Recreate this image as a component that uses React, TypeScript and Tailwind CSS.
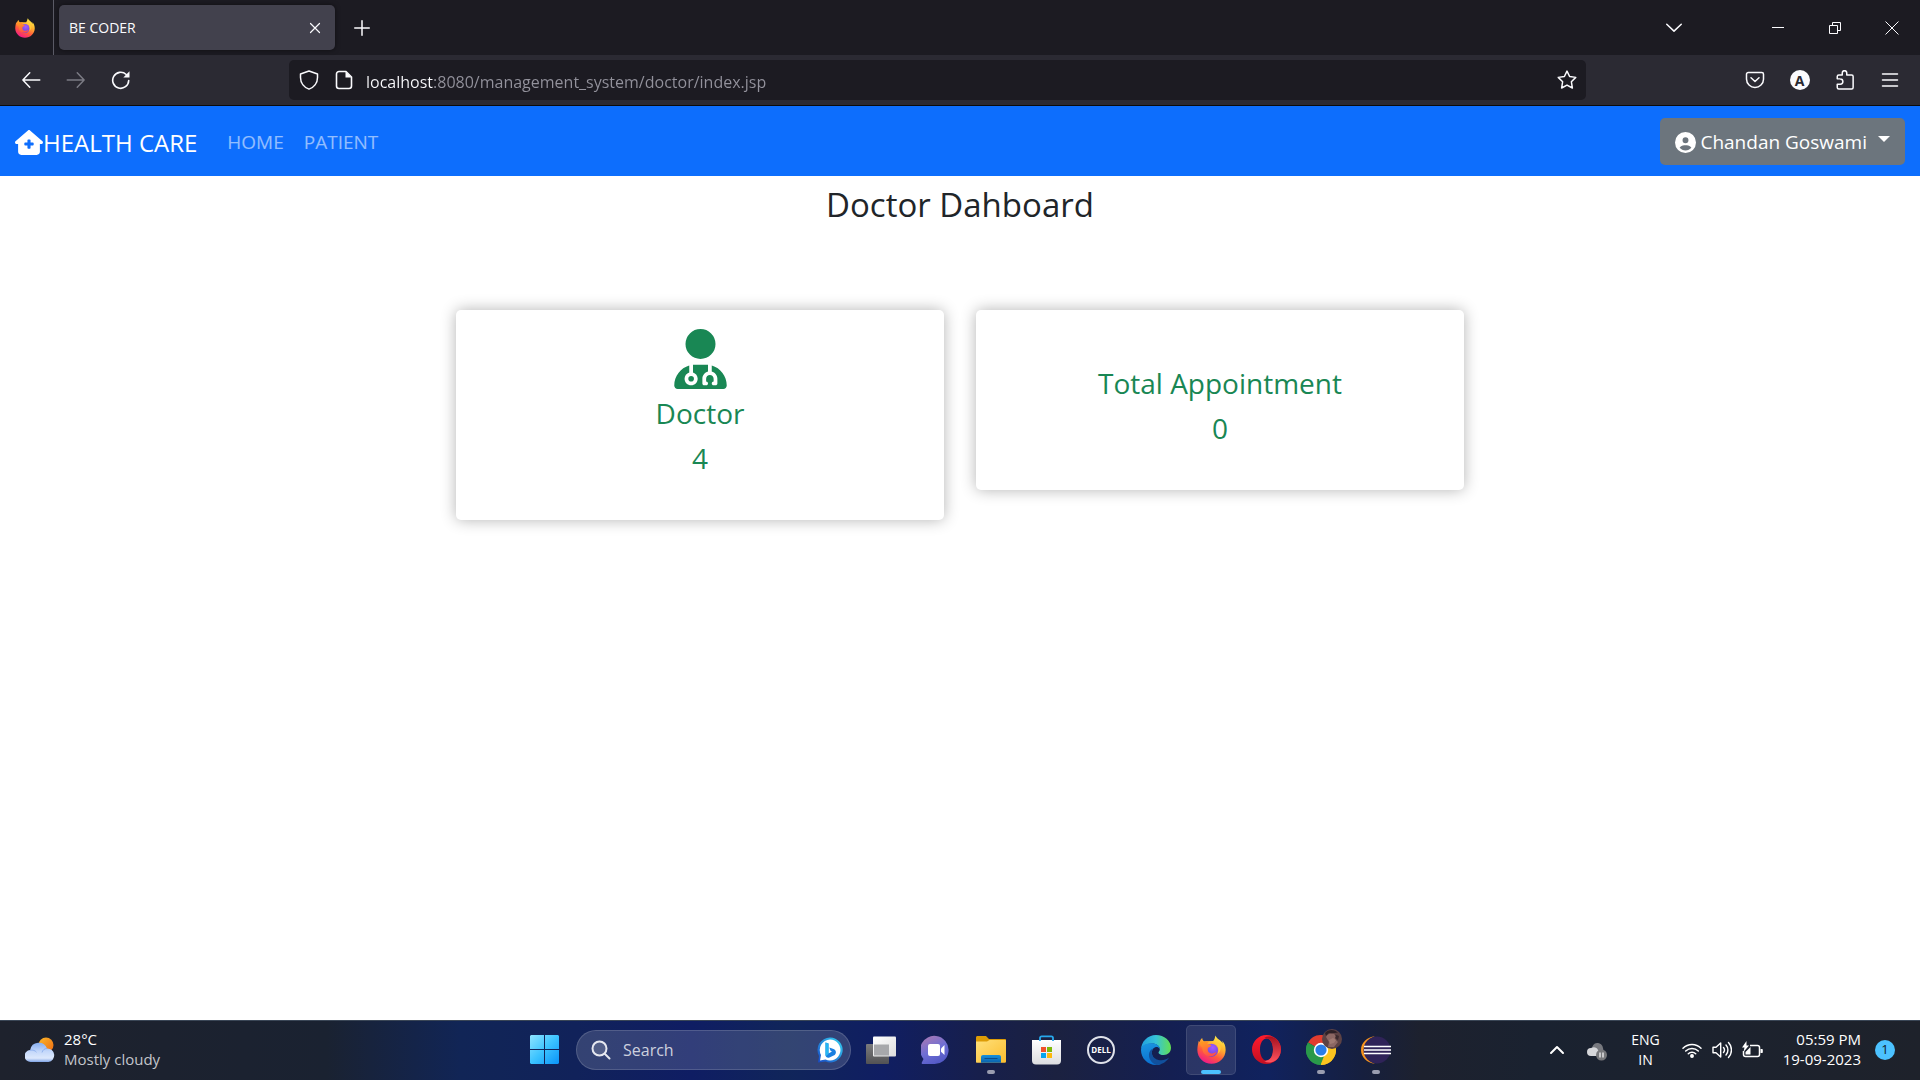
import React from "react";
import type { ReactNode } from "react";
import { FaCircleUser, FaHouseMedical, FaUserDoctor } from "react-icons/fa6";

/* ---------- browser icons ---------- */

function FirefoxLogo({ id, className }: { id: string; className: string }) {
  return (
    <svg viewBox="0 0 32 32" className={className} aria-hidden="true">
      <defs>
        <linearGradient id={`${id}-body`} x1="0.8" y1="0.05" x2="0.3" y2="1">
          <stop offset="0" stopColor="#fff04a" />
          <stop offset="0.35" stopColor="#ffb02e" />
          <stop offset="0.65" stopColor="#ff5a3c" />
          <stop offset="1" stopColor="#f0168c" />
        </linearGradient>
        <radialGradient id={`${id}-core`} cx="0.6" cy="0.3" r="0.8">
          <stop offset="0" stopColor="#a45bff" />
          <stop offset="1" stopColor="#5b3fd6" />
        </radialGradient>
        <linearGradient id={`${id}-fox`} x1="0.2" y1="0" x2="0.6" y2="1">
          <stop offset="0" stopColor="#ff9a1f" />
          <stop offset="1" stopColor="#ff4f4a" />
        </linearGradient>
      </defs>
      <path
        d="M20.5.5c-1 2.600-.8 4.200-2.700 6.200L7.600 6.800C6.300 5.800 5.800 4.600 5.800 3.200 4.300 4.200 3.400 5.900 3 7.600L1.800 6.600C1.500 9 .4 12 .4 16.500.4 25 7.400 31.700 16 31.700S31.600 25 31.600 16.500c0-4.500-1.400-8-4-10.200.5 1.200.8 2.200.9 3.200C26.300 5.200 21.700 4.500 20.500.5Z"
        fill={`url(#${id}-body)`}
      />
      <circle cx="16" cy="16.800" r="7.200" fill={`url(#${id}-core)`} />
      <path
        d="M3 8.500c2-1.500 4-1.500 5.500-.8 1.500-.8 3.200-1 4.800-.6-1 .8-1.800 1.800-2 2.900 1.100.8 3.700.6 4.500 1-.2 1.700-2.300 2.100-3.500 3-.5.600-.3 1.700-.5 2.200.2 2.900 2.600 4.400 5 4.200 2.200-.2 3.300-1.700 4.800-1.300-1.300 3.300-4.100 4.600-7 4.400C8.500 23.100 5.500 19 6 13.500 4.600 13.500 3.500 11 3 8.500Z"
        fill={`url(#${id}-fox)`}
      />
      <path d="M17.500 8.200c3.200.6 6.300 3.300 6.300 8.300 0 1.500-.4 3-1.200 4.200 2.400-1.400 3.900-4 3.600-7.100-.3-3.200-3.600-6.400-8.700-5.400Z" fill="#ffc93a" />
    </svg>
  );
}

function Stroke({
  children,
  box = 16,
  width = 1.2,
  className = "size-5",
}: {
  children: ReactNode;
  box?: number;
  width?: number;
  className?: string;
}) {
  return (
    <svg
      viewBox={`0 0 ${box} ${box}`}
      className={className}
      fill="none"
      stroke="currentColor"
      strokeWidth={width}
      strokeLinecap="round"
      strokeLinejoin="round"
      aria-hidden="true"
    >
      {children}
    </svg>
  );
}

const ToolButton = ({ label, children, className = "w-[45px]" }: { label: string; children: ReactNode; className?: string }) => (
  <button type="button" aria-label={label} className={`flex h-10 shrink-0 items-center justify-center ${className}`}>
    {children}
  </button>
);

function TabStrip() {
  return (
    <div className="flex h-[55px] items-center bg-[#1c1b22] text-[#fbfbfe]">
      <div className="flex h-full w-[54px] items-center justify-center border-r border-[#5b5b66] pr-1">
        <FirefoxLogo id="strip" className="size-5" />
      </div>
      <div className="ml-[5px] flex h-[45px] w-[276px] items-center justify-between rounded-[5px] bg-[#42414d] pr-2 pl-[10px] shadow-[0_0_5px_rgba(0,0,0,0.5)]">
        <span className="text-[14px]">BE CODER</span>
        <button type="button" aria-label="Close tab" className="flex size-6 items-center justify-center">
          <Stroke className="size-4">
            <path d="M3.500 3.500 12.500 12.500M12.500 3.500 3.500 12.500" />
          </Stroke>
        </button>
      </div>
      <ToolButton label="New tab" className="ml-1 w-[45px]">
        <Stroke>
          <path d="M8 2.200v11.600M2.200 8h11.600" />
        </Stroke>
      </ToolButton>
      <div className="ml-auto flex items-center">
        <ToolButton label="List all tabs" className="mr-[53px] w-[45px]">
          <Stroke>
            <path d="m2.200 5 5.800 5.500L13.800 5" />
          </Stroke>
        </ToolButton>
        <ToolButton label="Minimize" className="w-[57px]">
          <Stroke box={12} width={1} className="size-3">
            <path d="M0 5.500h12" />
          </Stroke>
        </ToolButton>
        <ToolButton label="Restore" className="w-[57px]">
          <svg viewBox="0 0 12 12" className="size-3" fill="none" stroke="currentColor" strokeWidth="1" aria-hidden="true">
            <path d="M.5 3.500h8v8h-8zM3.500 3.500v-3h8v8h-3" />
          </svg>
        </ToolButton>
        <ToolButton label="Close" className="w-[57px]">
          <Stroke box={14} width={1} className="size-[14px]">
            <path d="m.8.800 12.400 12.400M13.200.800.800 13.200" />
          </Stroke>
        </ToolButton>
      </div>
    </div>
  );
}

function Toolbar() {
  return (
    <div className="flex h-[51px] items-center border-b border-[#0c0c0d] bg-[#2b2a33] px-2 text-[#fbfbfe]">
      <ToolButton label="Back">
        <Stroke>
          <path d="M15 8H1.500M7 2.200 1.500 8 7 13.800" />
        </Stroke>
      </ToolButton>
      <span className="text-[#7b7b84]">
        <ToolButton label="Forward">
          <Stroke>
            <path d="M1 8h13.500M9 2.200 14.500 8 9 13.800" />
          </Stroke>
        </ToolButton>
      </span>
      <ToolButton label="Reload">
        <svg viewBox="0 0 20 20" className="size-5" aria-hidden="true">
          <path d="M17.700 10.500a8 8 0 1 1-2.500-6" fill="none" stroke="currentColor" strokeWidth="1.600" strokeLinecap="round" />
          <path d="M18.500 1.300v6.200h-6.200z" fill="currentColor" />
        </svg>
      </ToolButton>
      <div className="mx-[146px] flex h-10 flex-1 items-center rounded-[5px] bg-[#1c1b22] pr-[9px] pl-[10px]">
        <Stroke>
          <path d="M8 .8 14.800 3.200V6c0 4.500-3 8-6.800 9.300C4.200 14 1.200 10.500 1.200 6V3.200Z" />
        </Stroke>
        <svg viewBox="0 0 20 20" className="ml-[15px] size-5" aria-hidden="true">
          <path
            d="M12 1.500H5A2.500 2.500 0 0 0 2.500 4v12A2.500 2.500 0 0 0 5 18.500h10a2.500 2.500 0 0 0 2.500-2.500V7z"
            fill="none"
            stroke="currentColor"
            strokeWidth="1.600"
            strokeLinejoin="round"
          />
          <path d="M11.500 1.500v6h6z" fill="currentColor" />
        </svg>
        <input
          type="text"
          aria-label="Address"
          defaultValue="localhost:8080/management_system/doctor/index.jsp"
          className="ml-3 h-8 min-w-0 flex-1 bg-[linear-gradient(to_right,#fbfbfe_67px,#93929c_67px)] bg-clip-text pt-[3px] text-[16px] text-transparent outline-none"
        />
        <button type="button" aria-label="Bookmark this page">
          <Stroke>
            <path d="m8 .9 2.100 4.300 4.900.7-3.500 3.500.8 5-4.300-2.300-4.300 2.300.8-5L1 5.900l4.900-.7z" />
          </Stroke>
        </button>
      </div>
      <ToolButton label="Save to Pocket">
        <Stroke>
          <path d="M2.600 2h10.800c.8 0 1.400.6 1.400 1.300v4A6.800 6.800 0 0 1 8 14 6.800 6.800 0 0 1 1.200 7.300v-4C1.200 2.600 1.800 2 2.600 2Z" />
          <path d="m4.800 6.200 3.200 3 3.200-3" />
        </Stroke>
      </ToolButton>
      <ToolButton label="Account">
        <span className="flex size-5 items-center justify-center rounded-full bg-[#fbfbfe] text-[14px] font-bold text-[#2b2a33]">A</span>
      </ToolButton>
      <ToolButton label="Extensions">
        <Stroke>
          <path d="M1.800 7V5.200c0-.8.5-1.300 1.300-1.300h2.700V2.300a1.800 1.800 0 0 1 3.600 0v1.600h3.900c.7 0 1.200.5 1.200 1.200v8.800c0 .7-.5 1.200-1.200 1.200H3.100c-.8 0-1.300-.5-1.300-1.200v-2.600h2.400a2 2 0 0 0 0-4.200Z" />
        </Stroke>
      </ToolButton>
      <ToolButton label="Open application menu">
        <Stroke>
          <path d="M2 3.200h12M2 8h12M2 12.800h12" />
        </Stroke>
      </ToolButton>
    </div>
  );
}

/* ---------- page ---------- */

function NavBar() {
  return (
    <nav className="flex h-[70px] items-center bg-[#0d6efd] px-[15px] text-white">
      <a href="#" className="mr-[30px] flex items-center pt-[3px] text-[24px]">
        <FaHouseMedical className="h-[25px] w-[28px]" aria-hidden="true" />
        HEALTH CARE
      </a>
      <a href="#home" className="mr-5 pt-[3px] text-[19px] text-white/55">
        HOME
      </a>
      <a href="#patient" className="pt-[3px] text-[19px] text-white/55">
        PATIENT
      </a>
      <button type="button" className="ml-auto flex h-[47px] items-center rounded-[5px] bg-[#6c757d] px-[15px] pt-[3px] text-[19px]">
        <FaCircleUser className="mr-1 size-[21px]" aria-hidden="true" />
        Chandan Goswami
        <svg viewBox="0 0 12 6" className="mb-[7px] ml-[11px] h-[6px] w-3" fill="currentColor" aria-hidden="true">
          <path d="M0 0h12L6 6z" />
        </svg>
      </button>
    </nav>
  );
}

function Card({ icon, label, value, className }: { icon?: ReactNode; label: string; value: number; className: string }) {
  return (
    <section
      className={`flex flex-1 flex-col items-center rounded-[5px] bg-white text-[28px] leading-[45px] text-[#198754] shadow-[0_0_15px_rgba(0,0,0,0.3)] ${className}`}
    >
      {icon}
      <p>{label}</p>
      <p>{value}</p>
    </section>
  );
}

function Page() {
  return (
    <main className="flex-1 bg-white">
      <NavBar />
      <h1 className="pt-2 text-center text-[33px] leading-[42px] text-[#212529]">Doctor Dahboard</h1>
      <div className="mx-auto mt-[84px] flex max-w-[1040px] items-start gap-8 px-4">
        <Card
          className="pt-[19px] pb-[39px]"
          icon={<FaUserDoctor className="mb-[2px] h-[60px] w-[53px]" aria-hidden="true" />}
          label="Doctor"
          value={4}
        />
        <Card className="pt-[51px] pb-[39px]" label="Total Appointment" value={0} />
      </div>
    </main>
  );
}

/* ---------- taskbar ---------- */

function WeatherIcon() {
  return (
    <svg viewBox="0 0 30 26" className="h-[26px] w-[30px]" aria-hidden="true">
      <defs>
        <linearGradient id="sun" x1="0" y1="0" x2="1" y2="1">
          <stop offset="0" stopColor="#fbb829" />
          <stop offset="1" stopColor="#ee6a12" />
        </linearGradient>
        <linearGradient id="cloud" x1="0" y1="0" x2="0" y2="1">
          <stop offset="0" stopColor="#86aef0" />
          <stop offset="0.45" stopColor="#c4d8fa" />
          <stop offset="0.8" stopColor="#dce8fc" />
          <stop offset="1" stopColor="#7fa4e6" />
        </linearGradient>
      </defs>
      <circle cx="21" cy="8" r="7.500" fill="url(#sun)" />
      <path d="M6 25a6 6 0 0 1-.8-12A8.700 8.700 0 0 1 22 11.500 6.800 6.800 0 0 1 23.500 25Z" fill="url(#cloud)" />
      <path d="M5 13.200c3-.6 5.200.5 6.500 2M17 15.500c.5-2.400 2.600-4 5-4" stroke="#7ea4e8" strokeWidth="1" fill="none" opacity="0.7" />
    </svg>
  );
}

function WindowsIcon() {
  return (
    <svg viewBox="0 0 29 29" className="size-[29px]" aria-hidden="true">
      <defs>
        <linearGradient id="win" x1="0" y1="0" x2="1" y2="1">
          <stop offset="0" stopColor="#8fe4ff" />
          <stop offset="0.5" stopColor="#3cc3ff" />
          <stop offset="1" stopColor="#0a93f8" />
        </linearGradient>
      </defs>
      <path d="M1 0h13v14H0V1zM15 0h13l1 1v13H15zM0 15h14v14H1l-1-1zM15 15h14v13l-1 1H15z" fill="url(#win)" />
    </svg>
  );
}

function BingIcon() {
  return (
    <svg viewBox="0 0 26 26" className="size-[26px]" aria-hidden="true">
      <defs>
        <linearGradient id="bing" x1="1" y1="0" x2="0" y2="1">
          <stop offset="0" stopColor="#35d6f5" />
          <stop offset="1" stopColor="#1747c4" />
        </linearGradient>
      </defs>
      <path d="M13 .5A12.500 12.500 0 1 1 8.500 24.600L1 25.500 2 19A12.500 12.500 0 0 1 13 .5Z" fill="url(#bing)" />
      <path d="M13 2.500A10.500 10.500 0 1 1 8.500 22.500L3 23.500 4 18A10.500 10.500 0 0 1 13 2.500Z" fill="#fff" />
      <path d="M8.500 5.500 11.500 6.500V16.500l3.500-2-1.500-.8-1.200-3.200 4.200 1.500c3 1.200 3 4.500 1.200 6L12.500 20.500C10.500 21.500 8.500 20 8.500 18Z" fill="#1a7fe0" />
      <path d="M8.500 5.500 11.500 6.500V17l-2.600 2.300C8.600 18.800 8.500 18.300 8.500 18Z" fill="#25b6f2" />
    </svg>
  );
}

function TaskViewIcon() {
  return (
    <svg viewBox="0 0 30 28" className="h-7 w-[30px]" aria-hidden="true">
      <defs>
        <linearGradient id="tvback" x1="0" y1="0" x2="0" y2="1">
          <stop offset="0" stopColor="#7b7b7d" />
          <stop offset="1" stopColor="#525254" />
        </linearGradient>
        <linearGradient id="tvfront" x1="0" y1="0" x2="1" y2="1">
          <stop offset="0" stopColor="#fff" />
          <stop offset="1" stopColor="#dcdcdc" />
        </linearGradient>
      </defs>
      <rect x="0" y="8" width="23" height="20" rx="1" fill="url(#tvback)" />
      <rect x="7" y="0.500" width="23" height="20" rx="1" fill="url(#tvfront)" />
      <path d="M8 8.500h15v11H8z" fill="#a7a8ab" />
    </svg>
  );
}

function ChatIcon() {
  return (
    <svg viewBox="0 0 30 30" className="size-[30px]" aria-hidden="true">
      <defs>
        <linearGradient id="chat" x1="0.2" y1="0" x2="0.7" y2="1">
          <stop offset="0" stopColor="#a878b4" />
          <stop offset="0.5" stopColor="#6f6fd4" />
          <stop offset="1" stopColor="#4f56c4" />
        </linearGradient>
      </defs>
      <path d="M15 1a14 14 0 1 1-3 28H1.500c-.8 0-1-.8-.7-1.400L2.500 24A14 14 0 0 1 15 1Z" fill="url(#chat)" />
      <rect x="7" y="9" width="12" height="12" rx="2" fill="#fff" />
      <path d="M20 13.500 23.500 10v10L20 16.800z" fill="#fff" />
    </svg>
  );
}

function ExplorerIcon() {
  return (
    <svg viewBox="0 0 30 27" className="h-[27px] w-[30px]" aria-hidden="true">
      <defs>
        <linearGradient id="folder" x1="0" y1="0" x2="1" y2="1">
          <stop offset="0" stopColor="#ffe07a" />
          <stop offset="1" stopColor="#fbbd2e" />
        </linearGradient>
        <linearGradient id="tray" x1="0" y1="0" x2="0" y2="1">
          <stop offset="0" stopColor="#1590dc" />
          <stop offset="1" stopColor="#0b62ab" />
        </linearGradient>
      </defs>
      <path d="M0 1.500C0 .6.600 0 1.500 0H10l3 3H29c.6 0 1 .4 1 1v4H0z" fill="#dd9c06" />
      <path d="M0 5.500h11L13.500 4H29c.6 0 1 .4 1 1v20.500c0 .8-.4 1.200-1 1.200H1c-.6 0-1-.4-1-1z" fill="url(#folder)" />
      <path d="M5 26.700V21c0-1.300.9-2 2-2h16c1.200 0 2 .7 2 2v5.700z" fill="url(#tray)" />
      <path d="M8.500 22.500h13" stroke="#0a4c8c" strokeWidth="1" />
    </svg>
  );
}

function StoreIcon() {
  return (
    <svg viewBox="0 0 29 30" className="h-[30px] w-[29px]" aria-hidden="true">
      <defs>
        <linearGradient id="bag" x1="0" y1="0" x2="0" y2="1">
          <stop offset="0" stopColor="#fff" />
          <stop offset="1" stopColor="#dcdde0" />
        </linearGradient>
      </defs>
      <path d="M0 5h29v20.500a4 4 0 0 1-4 4H4a4 4 0 0 1-4-4z" fill="url(#bag)" />
      <path d="M8 6V3c0-1 .7-1.700 1.700-1.700h9.600C20.300 1.300 21 2 21 3v3" fill="none" stroke="#27a8ec" strokeWidth="1.800" />
      <path d="M9 12h5v5H9z" fill="#f0512b" />
      <path d="M15 12h5v5h-5z" fill="#7fb90a" />
      <path d="M9 18h5v5H9z" fill="#05a4ee" />
      <path d="M15 18h5v5h-5z" fill="#fdb80c" />
    </svg>
  );
}

function DellIcon() {
  return (
    <span className="flex size-7 items-center justify-center rounded-full border-2 border-[#dfe2ea] text-[8px] font-bold text-white">
      DELL
    </span>
  );
}

function EdgeIcon() {
  return (
    <svg viewBox="0 0 30 30" className="size-[30px]" aria-hidden="true">
      <defs>
        <linearGradient id="edge-top" x1="0" y1="0.500" x2="1" y2="0.500">
          <stop offset="0" stopColor="#219fe0" />
          <stop offset="0.5" stopColor="#36c3d8" />
          <stop offset="1" stopColor="#63e052" />
        </linearGradient>
        <linearGradient id="edge-left" x1="0.300" y1="0" x2="0.500" y2="1">
          <stop offset="0" stopColor="#1a94e0" />
          <stop offset="1" stopColor="#0a6fd0" />
        </linearGradient>
      </defs>
      <path d="M15 0c8.300 0 15 6 15 12.800 0 4.200-3.200 7.200-7.200 7.200-3.300 0-5.300-1.300-5.300-2.600 0-.8 1.300-1.200 1.300-3.200C18.800 11 15.500 8.500 11 8.500 5 8.500 0 11.500 0 15 0 6.700 6.700 0 15 0Z" fill="url(#edge-top)" />
      <path d="M0 15C0 11 4.500 8.300 10.500 8.300c4.800 0 8.300 2.700 8.300 5.700-1-1.800-2.700-2.300-4-2-3 .8-4.500 4-3.800 7.500.9 4.500 4.500 8.500 9 9.500-1.500.7-3.200 1-5 1C6.700 30 0 23.300 0 15Z" fill="url(#edge-left)" />
      <path d="M12.300 13.500c-3 3.500-1.300 10 5.200 11.500 4 .9 7.500-.3 10.500-2.500C25.800 26.500 21 30 15.500 29.900 10.500 28.500 7.500 23.500 8 19c.3-2.500 2-4.700 4.300-5.500Z" fill="#11509c" />
    </svg>
  );
}

function OperaIcon() {
  return (
    <svg viewBox="0 0 29 29" className="size-[29px]" aria-hidden="true">
      <defs>
        <linearGradient id="opera" x1="0" y1="0" x2="0" y2="1">
          <stop offset="0" stopColor="#ff1b2d" />
          <stop offset="1" stopColor="#c20f22" />
        </linearGradient>
        <linearGradient id="opera-side" x1="0" y1="0" x2="0" y2="1">
          <stop offset="0" stopColor="#a3101e" />
          <stop offset="1" stopColor="#ff5460" />
        </linearGradient>
      </defs>
      <path
        fillRule="evenodd"
        d="M14.500 0a14.500 14.500 0 1 1 0 29 14.500 14.500 0 0 1 0-29ZM14.500 3.500C10.500 3.500 8 8.500 8 14.500s2.500 11 6.500 11 6.500-5 6.500-11-2.500-11-6.500-11Z"
        fill="url(#opera)"
      />
      <path d="M12 2.500C16 .8 20.500 1.200 24 3.700a14.500 14.500 0 0 1 0 21.600c-3.500 2.500-8 2.900-12 1.200.8.300 1.600-.1 2.500-1 4 0 6.500-5 6.500-11s-2.500-11-6.500-11c-.9-.9-1.700-1.300-2.500-1Z" fill="url(#opera-side)" />
    </svg>
  );
}

function ChromeIcon() {
  return (
    <span className="relative block size-[30px]">
      <svg viewBox="0 0 30 30" className="size-[30px]" aria-hidden="true">
        <path d="M15 15 2 7.500A15 15 0 0 1 28 7.500Z" fill="#e23c2f" />
        <path d="M15 15 28 7.500A15 15 0 0 1 15 30Z" fill="#fcc41f" />
        <path d="M15 15v15A15 15 0 0 1 2 7.500Z" fill="#29994a" />
        <path d="M15 8h13.200a15 15 0 0 1-13.200 22l6-11.500z" fill="#fcc41f" />
        <path d="M2 7.500 9 18.500a7 7 0 0 0 9 2.800L14.500 30A15 15 0 0 1 2 7.500Z" fill="#29994a" />
        <circle cx="15" cy="15" r="7.200" fill="#fff" />
        <circle cx="15" cy="15" r="5.600" fill="#2a7de9" />
      </svg>
      <svg viewBox="0 0 20 20" className="absolute -top-[6px] left-4 size-5" aria-hidden="true">
        <circle cx="10" cy="10" r="10" fill="#5d4244" />
        <path d="M4 8c1-4 8-5 11-1l-2 3 3 3-4 5H6l1-5Z" fill="#8c6763" />
        <path d="M3 4c3-4 10-4 13 0-3-1-5 1-8 0-2 0-3 2-4 3Z" fill="#2c2026" />
        <path d="m7 11 4-2 3 2-2 3-4 1Z" fill="#a07a72" />
        <path d="M12 5c2 1 2 3 1 4l3 2 1-4Z" fill="#3a292d" />
      </svg>
    </span>
  );
}

function EclipseIcon() {
  return (
    <svg viewBox="0 0 30 28" className="h-7 w-[30px]" aria-hidden="true">
      <path d="M14 .3C6 1 0 6.800 0 14s6 13 14 13.700C8 25.500 3.500 20.500 3.500 14S8 2.500 14 .3Z" fill="#f7941e" />
      <circle cx="16" cy="14" r="13.500" fill="#2f2358" />
      <path d="M3 10.500h27M3 14h27M3 17.500h27" stroke="#fff" strokeWidth="1.500" />
    </svg>
  );
}

type TaskApp = { name: string; icon: ReactNode; state?: "open" | "active" };

const pinned: TaskApp[] = [
  { name: "Task view", icon: <TaskViewIcon /> },
  { name: "Chat", icon: <ChatIcon /> },
  { name: "File Explorer", icon: <ExplorerIcon />, state: "open" },
  { name: "Microsoft Store", icon: <StoreIcon /> },
  { name: "Dell", icon: <DellIcon /> },
  { name: "Microsoft Edge", icon: <EdgeIcon /> },
  { name: "Firefox", icon: <FirefoxLogo id="task" className="size-[29px]" />, state: "active" },
  { name: "Opera", icon: <OperaIcon /> },
  { name: "Google Chrome", icon: <ChromeIcon />, state: "open" },
  { name: "Eclipse", icon: <EclipseIcon />, state: "open" },
];

function TaskButton({ name, icon, state }: TaskApp) {
  return (
    <button
      type="button"
      aria-label={name}
      className={`relative flex size-[50px] items-center justify-center rounded-[5px] ${
        state === "active" ? "border border-white/10 bg-white/10" : ""
      }`}
    >
      {icon}
      {state === "open" && <span className="absolute bottom-px h-1 w-2 rounded-full bg-[#9a9db0]" />}
      {state === "active" && <span className="absolute bottom-0 h-1 w-5 rounded-full bg-[#4cc2ff]" />}
    </button>
  );
}

function Tray() {
  return (
    <div className="flex items-center justify-end pr-[25px] text-white">
      <button type="button" aria-label="Show hidden icons" className="mr-[22px]">
        <Stroke box={16} width={2} className="size-4">
          <path d="M2 11l6-6 6 6" />
        </Stroke>
      </button>
      <svg viewBox="0 0 20 18" className="mt-1 mr-6 h-[18px] w-5" aria-hidden="true">
        <path d="M5 6a5.500 5.500 0 0 1 11-1l1 5H6Z" fill="#77797f" />
        <path d="M4 13a4 4 0 0 1 0-8c3-1.500 6-.5 7 2l3 6Z" fill="#d6d7da" />
        <circle cx="14.500" cy="12" r="5.500" fill="#77787b" />
        <path d="M13 9.500v5M16 9.500v5" stroke="#fff" strokeWidth="1.200" />
      </svg>
      <p className="mr-[22px] text-center text-[14px] leading-5">
        ENG
        <br />
        IN
      </p>
      <button type="button" aria-label="Network, volume and battery" className="mr-5 flex items-center gap-[10px]">
        <svg viewBox="0 0 20 16" className="h-4 w-5" fill="none" stroke="currentColor" strokeWidth="1.500" strokeLinecap="round" aria-hidden="true">
          <path d="M1 6.200a12.700 12.700 0 0 1 18 0M3.700 9a9 9 0 0 1 12.600 0M6.300 11.700a5.200 5.200 0 0 1 7.400 0" />
          <circle cx="10" cy="14" r="1.200" fill="currentColor" />
        </svg>
        <svg viewBox="0 0 20 18" className="h-[18px] w-5" fill="none" stroke="currentColor" strokeWidth="1.400" strokeLinecap="round" strokeLinejoin="round" aria-hidden="true">
          <path d="M1 6.200h3L8.700 2v14L4 11.800H1zM11.500 6.500a4 4 0 0 1 0 5M14 4a7.500 7.500 0 0 1 0 10M16.500 1.500a11 11 0 0 1 0 15" />
        </svg>
        <svg viewBox="0 0 21 18" className="h-[18px] w-[21px]" aria-hidden="true">
          <path d="M8 4.500h7.500a2 2 0 0 1 2 2v7a2 2 0 0 1-2 2H3.500a2 2 0 0 1-2-2V10" fill="none" stroke="currentColor" strokeWidth="1.500" />
          <path d="M18.500 8h1.300c.6 0 1 .4 1 1v2c0 .6-.4 1-1 1h-1.300z" fill="currentColor" />
          <path d="M4.500 0 0 6.500h2.500L1.500 11 7 4.500H4.500zM3.500 11 8.500 6v7.500h-5z" fill="currentColor" />
        </svg>
      </button>
      <p className="mr-[14px] pb-[2px] text-right text-[15px] leading-5">
        05:59 PM
        <br />
        19-09-2023
      </p>
      <button
        type="button"
        aria-label="1 notification"
        className="flex size-5 items-center justify-center rounded-full bg-[#4cc2ff] text-[13px] text-[#10202c]"
      >
        1
      </button>
    </div>
  );
}

function Taskbar() {
  return (
    <footer className="grid h-[60px] grid-cols-[1fr_auto_1fr] items-center border-t border-[#3a4656] bg-[linear-gradient(to_right,#1e222d_0%,#1a2231_17%,#112556_24%,#11225a_30%,#0f1d63_36%,#10255a_41%,#101e62_46%,#171f4c_51%,#1b2140_55%,#141f52_61%,#10225e_66%,#161f3e_71%,#1d212e_74%,#1a2230_80%,#1e222b_100%)] pb-[2px]">
      <div className="flex items-center gap-[9px] pl-[25px]">
        <WeatherIcon />
        <p className="pb-[2px] text-[15px] leading-5 text-white">
          28°C
          <br />
          <span className="text-[#c3c5cb]">Mostly cloudy</span>
        </p>
      </div>
      <div className="flex items-center gap-[5px]">
        <TaskButton name="Start" icon={<WindowsIcon />} />
        <label className="ml-[2px] flex h-10 w-[275px] items-center gap-3 rounded-full border border-white/15 bg-white/15 pr-[7px] pl-[14px]">
          <svg viewBox="0 0 20 20" className="size-5 shrink-0" fill="none" stroke="#e6e8f0" strokeWidth="2" strokeLinecap="round" aria-hidden="true">
            <circle cx="8.500" cy="8.500" r="7" fill="rgba(255,255,255,0.15)" />
            <path d="m14 14 4.500 4.500" />
          </svg>
          <input
            type="text"
            aria-label="Search"
            placeholder="Search"
            className="min-w-0 flex-1 bg-transparent text-[16px] text-white outline-none placeholder:text-[#ccd0de]"
          />
          <BingIcon />
        </label>
        {pinned.map((app) => (
          <TaskButton key={app.name} {...app} />
        ))}
      </div>
      <Tray />
    </footer>
  );
}

export default function App() {
  return (
    <div className="flex min-h-screen flex-col font-['Open_Sans','Noto_Sans',sans-serif]">
      <header>
        <TabStrip />
        <Toolbar />
      </header>
      <Page />
      <Taskbar />
    </div>
  );
}
